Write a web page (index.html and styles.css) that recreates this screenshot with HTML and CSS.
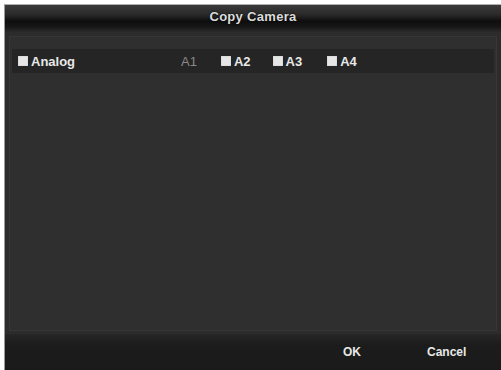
FILE: index.html
```
<!DOCTYPE html>
<html>
<head>
<meta charset="utf-8">
<link rel="stylesheet" href="styles.css">
</head>
<body>
<div class="dialog">
  <div class="titlebar">Copy Camera</div>
  <div class="body">
    <div class="panel">
      <div class="row">
        <label class="item analog"><span class="box"></span>Analog</label>
        <span class="item dim">A1</span>
        <label class="item a2"><span class="box"></span>A2</label>
        <label class="item a3"><span class="box"></span>A3</label>
        <label class="item a4"><span class="box"></span>A4</label>
      </div>
    </div>
  </div>
  <div class="footer">
    <span class="btn ok">OK</span>
    <span class="btn cancel">Cancel</span>
  </div>
</div>
</body>
</html>
```
FILE: styles.css
```
html, body {
  margin: 0;
  padding: 0;
  background: #ffffff;
}
body {
  width: 501px;
  height: 370px;
  overflow: hidden;
  font-family: "Liberation Sans", Arial, sans-serif;
}
.dialog {
  margin: 4px 0 0 4px;
  width: 497px;
  height: 366px;
  display: flex;
  flex-direction: column;
  background: #2d2d2d;
  border-left: 1px solid #9a9a9a;
  border-top: 1px solid #b0b0b0;
  box-sizing: border-box;
}
.titlebar {
  height: 27px;
  flex: none;
  background: linear-gradient(#3a3a3a 0%, #2a2a2a 35%, #0e0e0e 60%, #161616 80%, #2a2a2a 100%);
  color: #dcdcdc;
  font-size: 13px;
  font-weight: bold;
  letter-spacing: 0.3px;
  text-align: center;
  line-height: 24px;
  text-shadow: 0 0 2px #000;
}
.body {
  flex: 1;
  padding: 4px 4px 3px 4px;
  display: flex;
  background: #2c2c2c;
}
.panel {
  flex: 1;
  background: #2f2f2f;
  border: 1px solid #363636;
  padding-top: 12px;
}
.row {
  height: 24px;
  background: #252525;
  margin: 0 2px;
  display: flex;
  align-items: center;
  color: #e8e8e8;
  font-size: 13px;
  font-weight: bold;
}
.item {
  display: flex;
  align-items: center;
}
.box {
  width: 10px;
  height: 10px;
  background: #e6e6e6;
  margin-right: 3px;
  box-shadow: inset 0 0 1px #888;
}
.analog { margin-left: 6px; }
.dim { color: #8a8a8a; font-weight: normal; margin-left: 106px; }
.a2 { margin-left: 24px; }
.a3 { margin-left: 22px; }
.a4 { margin-left: 25px; }
.footer {
  height: 36px;
  flex: none;
  background: linear-gradient(#262626, #1c1c1c 30%, #1a1a1a);
  display: flex;
  align-items: center;
  color: #e8e8e8;
  font-size: 12px;
  font-weight: bold;
}
.ok { margin-left: 338px; }
.cancel { margin-left: 66px; }
```
